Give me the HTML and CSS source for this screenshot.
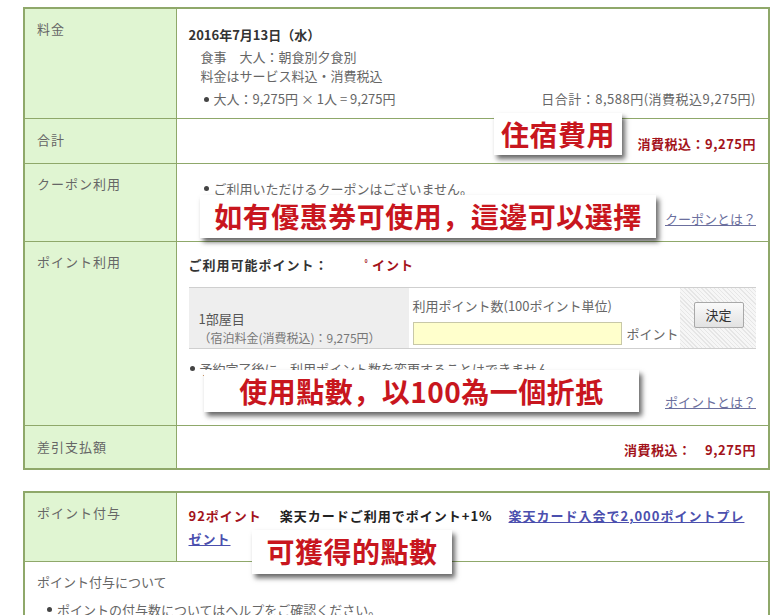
FILE: index.html
```html
<!DOCTYPE html>
<html lang="ja">
<head>
    <meta charset="UTF-8">
    <title>料金</title>
    <link rel="stylesheet" href="styles.css">
</head>
<body>
<div class="page">
    <table class="fee-table">
        <tr class="row-fee">
            <th>料金</th>
            <td>
                <p class="date">2016年7月13日（水）</p>
                <p class="detail">食事　大人：朝食別夕食別</p>
                <p class="detail">料金はサービス料込・消費税込</p>
                <div class="day-line">
                    <span class="bullet">大人：9,275円 × 1人 = 9,275円</span>
                    <span class="day-sum">日合計：8,588円(消費税込9,275円)</span>
                </div>
            </td>
        </tr>
        <tr class="row-total">
            <th>合計</th>
            <td class="price">消費税込：9,275円</td>
        </tr>
        <tr class="row-coupon">
            <th>クーポン利用</th>
            <td>
                <p class="bullet note">ご利用いただけるクーポンはございません。</p>
                <p class="help"><a href="#">クーポンとは？</a></p>
            </td>
        </tr>
        <tr class="row-point">
            <th>ポイント利用</th>
            <td>
                <p class="usable">ご利用可能ポイント：<span class="red">ﾟイント</span></p>
                <div class="point-box">
                    <div class="room">
                        <p class="room-name">1部屋目</p>
                        <p class="room-fee">（宿泊料金(消費税込)：9,275円）</p>
                    </div>
                    <div class="point-input">
                        <p>利用ポイント数(100ポイント単位)</p>
                        <div class="input-row">
                            <input type="text" class="point-field">
                            <span>ポイント</span>
                        </div>
                    </div>
                    <div class="point-action">
                        <button class="decide-btn">決定</button>
                    </div>
                </div>
                <p class="bullet note warn">予約完了後に、利用ポイント数を変更することはできません。</p>
                <p class="help"><a href="#">ポイントとは？</a></p>
            </td>
        </tr>
        <tr class="row-pay">
            <th>差引支払額</th>
            <td class="price">消費税込：　9,275円</td>
        </tr>
    </table>

    <table class="fee-table grant-table">
        <tr class="row-grant">
            <th>ポイント付与</th>
            <td>
                <span class="red">92ポイント</span>
                <span class="card">楽天カードご利用でポイント+1%</span>
                <a href="#" class="card-link">楽天カード入会で2,000ポイントプレゼント</a>
            </td>
        </tr>
        <tr class="row-about">
            <td colspan="2">
                <p class="about-title">ポイント付与について</p>
                <p class="bullet about-note">ポイントの付与数についてはヘルプをご確認ください。</p>
            </td>
        </tr>
    </table>

    <div class="tag tag-stay">住宿費用</div>
    <div class="tag tag-coupon">如有優惠券可使用，這邊可以選擇</div>
    <div class="tag tag-point">使用點數，以100為一個折抵</div>
    <div class="tag tag-grant">可獲得的點數</div>
</div>
</body>
</html>
```

FILE: styles.css
```css
* {
    margin: 0;
    padding: 0;
    box-sizing: border-box;
}
body {
    background: #fff;
    font-family: "Noto Sans CJK JP", "Noto Sans", sans-serif;
    font-size: 13px;
    color: #666;
}
.page {
    position: relative;
    width: 779px;
    height: 615px;
    padding: 7px 0 0 23px;
    overflow: hidden;
}
.fee-table {
    width: 747px;
    border-collapse: collapse;
    border: 2px solid #8fa86a;
}
.fee-table th,
.fee-table td {
    border: 1px solid #8fa86a;
    vertical-align: top;
    text-align: left;
    font-weight: normal;
}
.fee-table th {
    width: 152px;
    background: #e0f5d2;
    padding: 10px 12px;
    line-height: 20px;
    letter-spacing: 1px;
    color: #666;
}
.fee-table td {
    padding: 0 12px;
    line-height: 19px;
}
p {
    line-height: 19px;
}
.bullet::before {
    content: "";
    display: inline-block;
    width: 5px;
    height: 5px;
    border-radius: 50%;
    background: #444;
    margin: 0 5px 2px 0;
    vertical-align: middle;
}
.red {
    color: #a3131b;
    font-weight: bold;
}

/* 料金 */
.row-fee {
    height: 110px;
}
.row-fee td {
    padding-top: 16px;
}
.date {
    font-weight: bold;
    color: #333;
    line-height: 20px;
    margin-bottom: 2px;
}
.detail {
    padding-left: 12px;
}
.day-line {
    display: flex;
    justify-content: space-between;
    margin-top: 4px;
    padding-left: 15px;
}
.day-sum {
    letter-spacing: 0.5px;
}

/* 合計 */
.row-total {
    height: 45px;
}
.row-total th,
.row-pay th {
    padding-top: 11px;
}
.fee-table .price {
    text-align: right;
    color: #a3131b;
    font-weight: bold;
    vertical-align: middle;
    padding-top: 5px;
    letter-spacing: 0.5px;
}

/* クーポン */
.row-coupon {
    height: 78px;
}
.row-coupon td {
    padding-top: 15px;
}
.note {
    padding-left: 15px;
}
.help {
    text-align: right;
    margin-top: 11px;
}
.help a {
    color: #6b6f9e;
}

/* ポイント利用 */
.row-point {
    height: 184px;
}
.row-point td {
    padding-top: 13px;
}
.usable {
    font-weight: bold;
    color: #333;
    line-height: 20px;
    letter-spacing: 1px;
}
.usable .red {
    margin-left: 36px;
}
.point-box {
    display: flex;
    height: 62px;
    margin-top: 12px;
    border-top: 1px solid #cfcfcf;
    border-bottom: 1px solid #cfcfcf;
}
.room {
    width: 220px;
    background: #eeeeee;
    padding: 20px 0 0 10px;
}
.room-name {
    color: #555;
    line-height: 22px;
}
.room-fee {
    font-size: 12px;
    line-height: 16px;
    color: #777;
}
.point-input {
    width: 271px;
    padding: 8px 0 0 4px;
}
.input-row {
    display: flex;
    align-items: center;
    gap: 5px;
    margin-top: 7px;
}
.point-field {
    width: 209px;
    height: 23px;
    background: #ffffcc;
    border: 1px solid #c8c8a8;
}
.point-action {
    flex: 1;
    display: flex;
    align-items: center;
    padding: 0 0 6px 14px;
    background: repeating-linear-gradient(45deg, #e6e6e6 0 1px, #f6f6f6 1px 3px);
}
.decide-btn {
    width: 50px;
    height: 26px;
    font-family: inherit;
    font-size: 13px;
    color: #333;
    background: linear-gradient(#fafafa, #e2e2e2);
    border: 1px solid #a8a8a8;
    border-radius: 2px;
}
.warn {
    margin-top: 10px;
    padding-left: 1px;
}
.row-point .help {
    margin-top: 14px;
}

/* 差引支払額 */
.row-pay {
    height: 44px;
}

/* ポイント付与 */
.grant-table {
    margin-top: 21px;
}
.row-grant {
    height: 69px;
}
.row-grant td {
    padding-top: 11px;
    line-height: 23px;
    letter-spacing: 1px;
}
.card {
    color: #222;
    font-weight: bold;
    margin-left: 14px;
}
.card-link {
    color: #4b4fae;
    font-weight: bold;
    margin-left: 12px;
}
.row-about td {
    padding: 10px 12px 0 12px;
    height: 80px;
}
.about-note {
    margin-top: 9px;
    padding-left: 10px;
}

/* overlay captions */
.tag {
    position: absolute;
    background: #fff;
    color: #c8161e;
    font-family: "Noto Sans CJK TC", "Noto Sans CJK JP", sans-serif;
    font-weight: bold;
    font-size: 28px;
    letter-spacing: 0.5px;
    line-height: 42px;
    text-align: center;
    white-space: nowrap;
    box-shadow: 3px 4px 5px rgba(0, 0, 0, 0.6);
}
.tag-stay {
    left: 494px;
    top: 113px;
    width: 128px;
    height: 42px;
}
.tag-coupon {
    left: 200px;
    top: 195px;
    width: 456px;
    height: 43px;
}
.tag-point {
    left: 204px;
    top: 370px;
    width: 435px;
    height: 42px;
}
.tag-grant {
    left: 252px;
    top: 530px;
    width: 200px;
    height: 44px;
}
```
